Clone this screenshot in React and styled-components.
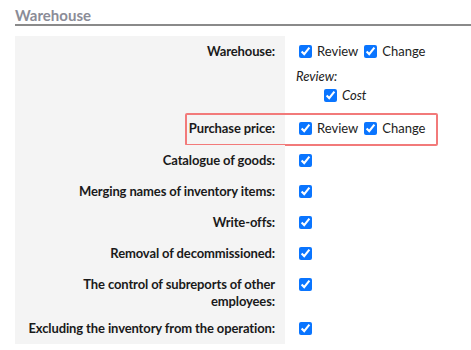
import React from 'react'
import styled, { createGlobalStyle } from 'styled-components'

const rows = [
  { label: 'Catalogue of goods:' },
  { label: 'Merging names of inventory items:' },
  { label: 'Write-offs:' },
  { label: 'Removal of decommissioned:' },
  { label: 'The control of subreports of other employees:' },
  { label: 'Excluding the inventory from the operation:' },
]

function Check({ label, italic }) {
  return (
    <CheckLabel $italic={italic}>
      <Box type='checkbox' defaultChecked />
      {label}
    </CheckLabel>
  )
}

export default function App() {
  return (
    <>
      <Global />
      <Wrap>
        <Title>Warehouse</Title>
        <Table>
          <Row>
            <Label>Warehouse:</Label>
            <Value $pb={7}>
              <Line>
                <Check label='Review' />
                <Check label='Change' />
              </Line>
              <Sub>Review:</Sub>
              <Nested>
                <Check label='Cost' italic />
              </Nested>
            </Value>
          </Row>
          <Row>
            <Highlight />
            <Label>Purchase price:</Label>
            <Value $pb={7}>
              <Line>
                <Check label='Review' />
                <Check label='Change' />
              </Line>
            </Value>
          </Row>
          {rows.map((r) => (
            <Row key={r.label}>
              <Label>{r.label}</Label>
              <Value>
                <Line>
                  <Check />
                </Line>
              </Value>
            </Row>
          ))}
        </Table>
      </Wrap>
    </>
  )
}

const Global = createGlobalStyle`
  body {
    margin: 0;
    background: #fff;
    font-family: Lato, "Open Sans", sans-serif;
  }
`

const Wrap = styled.div`
  padding: 0 0 0 15px;
`

const Title = styled.h2`
  margin: 0;
  padding-top: 6px;
  font-size: 15px;
  font-weight: 700;
  line-height: 18px;
  color: #8b8c97;
  border-bottom: 2px solid #8a8a8a;
`

const Table = styled.div`
  margin-top: 10px;
  display: flex;
  flex-direction: column;
`

const Row = styled.div`
  position: relative;
  display: flex;
  align-items: stretch;
`

const Label = styled.div`
  width: 250px;
  flex-shrink: 0;
  background: #f4f4f4;
  padding: 7px 10px 3px 10px;
  text-align: right;
  font-size: 13px;
  font-weight: 700;
  line-height: 17px;
  letter-spacing: -0.12px;
  color: #1a1a1a;
`

const Value = styled.div`
  padding: 6px 0 ${(p) => p.$pb ?? 6}px 11px;
  font-size: 13px;
  line-height: 17px;
  color: #222;
`

const Line = styled.div`
  display: flex;
  align-items: center;
  gap: 3px;
  height: 19px;
`

const CheckLabel = styled.label`
  display: inline-flex;
  align-items: center;
  font-style: ${(p) => (p.$italic ? 'italic' : 'normal')};
`

const Box = styled.input`
  width: 13px;
  height: 13px;
  margin: 3px 5px 3px 3px;
  accent-color: #0a75ff;
`

const Sub = styled.div`
  font-style: italic;
  margin-top: 7px;
`

const Nested = styled.div`
  margin-top: 1px;
  padding-left: 25px;
`

const Highlight = styled.div`
  position: absolute;
  left: 170px;
  top: 0;
  width: 249px;
  height: 29px;
  border: 2px solid #f27a7a;
  border-radius: 2px;
  pointer-events: none;
`
